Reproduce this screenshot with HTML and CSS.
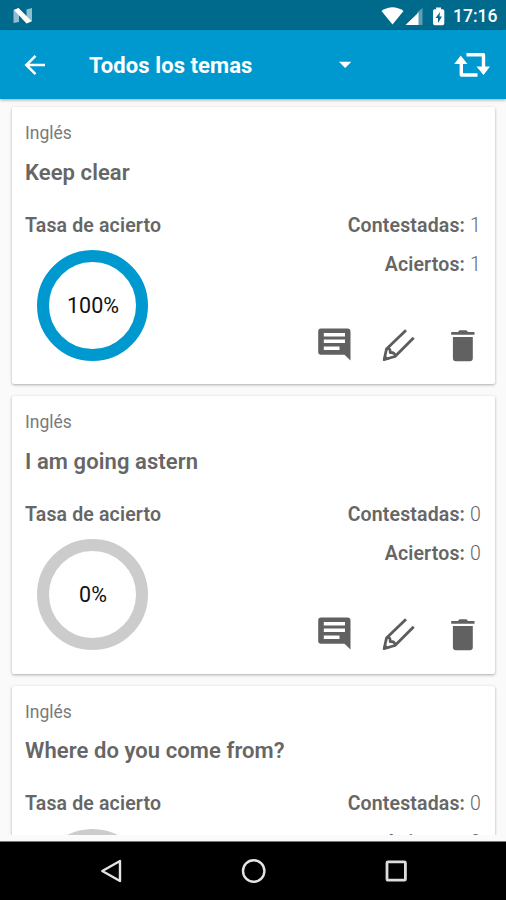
FILE: index.html
```html
<!DOCTYPE html>
<html lang="es">
<head>
<meta charset="utf-8">
<title>Todos los temas</title>
<link rel="stylesheet" href="styles.css">
</head>
<body>
<svg class="defs" width="0" height="0" aria-hidden="true">
  <symbol id="comment" viewBox="0 0 36 36">
    <path fill="#616161" fill-rule="evenodd" d="M4 1.500H30.500Q33.500 1.500 33.500 4.500V33.500L27.500 27.800H4Q1.200 27.800 1.200 25V4.500Q1.200 1.500 4 1.500ZM6.800 6V9.500H28V6ZM6.800 12.500V16H28V12.500ZM6.800 19.500V23H22.500V19.500Z"/>
  </symbol>
  <symbol id="pencil" viewBox="0 0 36 36">
    <path fill="none" stroke="#5c5c5c" stroke-width="2.800" stroke-linejoin="round" d="M25 3.200L5.500 22L3.200 32.500L14 29.500L32.700 10.700M5.500 22C8 20.800 9.500 22 9.200 25.500C12.500 25.300 14.500 26.500 14 29.500"/>
    <path fill="#5c5c5c" d="M1.800 34L3.500 27.500L8.500 32.500Z"/>
  </symbol>
  <symbol id="trash" viewBox="0 0 36 36">
    <path fill="#616161" d="M6.200 5H13L14.500 3.200H21.500L23 5H29.500V7.800H6.200ZM7.900 10H27.800V31Q27.800 34.200 24.800 34.200H10.900Q7.900 34.200 7.900 31Z"/>
  </symbol>
</svg>
<div class="phone">
  <div class="status">
    <svg class="logo" width="20" height="16" viewBox="0 0 20 16">
      <path fill="#8fbfcf" d="M.5 2L6 0V14L.5 15ZM13.500 1.500L19 0V13.500L13.500 15.500Z"/>
      <path fill="#fff" d="M1 2L5.500 0L18.500 13L13.500 15.500Z"/>
    </svg>
    <svg width="72" height="22" viewBox="0 0 72 22">
      <path fill="#fff" d="M.5 6Q11.500-1.500 22.500 6L11.500 19.500Z"/>
      <path fill="#5c9fb5" d="M41.500 3V20H36V7.500Z"/>
      <path fill="#fff" d="M24.500 20L37.500 7.500V20Z"/>
      <path fill="#fff" d="M55 2.500H60V4.300H61.500Q63.300 4.300 63.300 6V18.500Q63.300 20.200 61.500 20.200H53.800Q52 20.200 52 18.500V6Q52 4.300 53.800 4.300H55Z"/>
      <path fill="#006a8d" d="M59 7L54.500 13H57V18L61 11.500H58.500Z"/>
    </svg>
    <span class="time">17:16</span>
  </div>
  <header class="bar">
    <svg class="back" width="22" height="22" viewBox="0 0 22 22"><path fill="none" stroke="#fff" stroke-width="2.500" d="M21 11H2.500M11.500 1.800L2.300 11L11.500 20.200"/></svg>
    <h1>Todos los temas</h1>
    <svg class="caret" width="14" height="8" viewBox="0 0 14 8"><path fill="#fff" d="M1 .8H13.300L7.200 7Z"/></svg>
    <svg class="loop" width="38" height="26" viewBox="0 0 38 26"><path fill="none" stroke="#fff" stroke-width="3.400" stroke-linejoin="round" d="M13.500 2.700H30.500V15M24.500 23H8.300V9"/><path fill="#fff" d="M1.200 12L7.700 3.500L14.500 12ZM23.500 14.500H37L30.500 23Z"/></svg>
  </header>
  <main class="list">
    <article class="card">
      <p class="topic">Inglés</p>
      <h2>Keep clear</h2>
      <div class="stats">
        <div><h3>Tasa de acierto</h3><div class="ring full">100%</div></div>
        <div class="side">
          <p><b>Contestadas:</b> <span>1</span></p>
          <p><b>Aciertos:</b> <span>1</span></p>
          <div class="actions"><svg><use href="#comment"/></svg><svg><use href="#pencil"/></svg><svg><use href="#trash"/></svg></div>
        </div>
      </div>
    </article>
    <article class="card">
      <p class="topic">Inglés</p>
      <h2>I am going astern</h2>
      <div class="stats">
        <div><h3>Tasa de acierto</h3><div class="ring">0%</div></div>
        <div class="side">
          <p><b>Contestadas:</b> <span>0</span></p>
          <p><b>Aciertos:</b> <span>0</span></p>
          <div class="actions"><svg><use href="#comment"/></svg><svg><use href="#pencil"/></svg><svg><use href="#trash"/></svg></div>
        </div>
      </div>
    </article>
    <article class="card">
      <p class="topic">Inglés</p>
      <h2>Where do you come from?</h2>
      <div class="stats">
        <div><h3>Tasa de acierto</h3><div class="ring"></div></div>
        <div class="side">
          <p><b>Contestadas:</b> <span>0</span></p>
          <p><b>Aciertos:</b> <span>0</span></p>
        </div>
      </div>
    </article>
  </main>
  <nav class="nav">
    <svg width="24" height="26" viewBox="0 0 24 26"><path fill="none" stroke="#e4e4e4" stroke-width="2.400" stroke-linejoin="round" d="M21 3V23L3.300 13Z"/></svg>
    <svg width="26" height="26" viewBox="0 0 26 26"><circle cx="12.700" cy="13" r="10.700" fill="none" stroke="#e4e4e4" stroke-width="2.400"/></svg>
    <svg width="24" height="26" viewBox="0 0 24 26"><rect x="3" y="3.800" width="18.400" height="18.400" rx="1" fill="none" stroke="#dcdcdc" stroke-width="2.800"/></svg>
  </nav>
</div>
</body>
</html>
```
FILE: styles.css
```css
* { box-sizing: border-box; }
body { margin: 0; font-family: Roboto, sans-serif; color: #666; background: #fafafa; }
h1, h2, h3, p { margin: 0; }
svg { display: block; flex: none; }
.defs { position: absolute; }
.phone { width: 506px; height: 900px; overflow: hidden; display: flex; flex-direction: column; }

.status { height: 30px; flex: none; background: #006a8d; display: flex; align-items: center; padding: 1px 9px 0 13px; }
.logo { margin-right: auto; }
.time { width: 44px; color: #fff; font-size: 17.500px; font-weight: 500; line-height: 28px; white-space: nowrap; }

.bar { height: 69px; flex: none; background: #0099cf; display: flex; align-items: center; padding: 0 15px 0 24px; box-shadow: 0 1px 3px rgba(0, 0, 0, .35); z-index: 1; }
.bar h1 { width: 249px; margin-left: 43px; color: #fff; font-size: 22px; letter-spacing: .08px; font-weight: 700; line-height: 28px; padding-top: 2px; white-space: nowrap; }
.loop { margin-left: auto; }

.list { height: 736px; flex: none; overflow: hidden; padding: 8px 11px 0 12px; display: flex; flex-direction: column; gap: 12px; }
.card { height: 277.300px; flex: none; background: #fff; border-radius: 2px; box-shadow: 0 1px 3px rgba(0, 0, 0, .32); padding: 13px 14px 0 13px; }
.topic { font-size: 17.500px; line-height: 26px; color: #7a7a7a; }
.card h2 { font-size: 22px; font-weight: 600; letter-spacing: .08px; line-height: 30px; margin-top: 11.600px; color: #666; }
.stats { display: flex; justify-content: space-between; margin-top: 24.100px; }
.stats h3, .side p { font-size: 19.500px; line-height: 28px; font-weight: 600; letter-spacing: .15px; white-space: nowrap; }
.side { display: flex; flex-direction: column; align-items: flex-end; }
.side b { font-weight: 600; }
.side span { font-weight: 300; }
.side p + p { margin-top: 11px; }
.actions { display: flex; gap: 28px; margin-top: 48.300px; }
.actions svg { width: 36px; height: 36px; }
.ring { width: 111px; height: 111px; margin: 10.300px 0 0 12px; border: 12.500px solid #ccc; border-radius: 50%; display: flex; align-items: center; justify-content: center; font-size: 21.500px; padding-left: 1px; color: #111; }
.ring.full { border-color: #0099cf; }

.nav { flex: none; height: 59px; margin-top: 6px; background: #000; border-top: 1px solid #777; display: flex; align-items: center; justify-content: space-between; padding: 0 98px 0 99px; }
```
